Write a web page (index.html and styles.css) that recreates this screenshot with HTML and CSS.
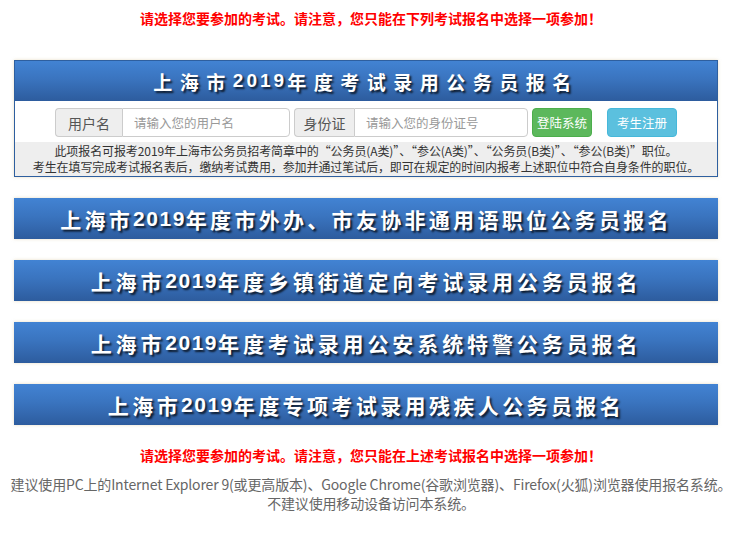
FILE: index.html
```html
<!DOCTYPE html>
<html lang="zh-CN">
<head>
<meta charset="utf-8">
<title>上海市2019年度考试录用公务员报名</title>
<link rel="stylesheet" href="styles.css">
</head>
<body>
<p class="notice notice-top">请选择您要参加的考试。请注意，您只能在下列考试报名中选择一项参加！</p>

<div class="wrap">
  <div class="panel">
    <div class="banner t1">上海市<span class="num">2019</span>年度考试录用公务员报名</div>
    <div class="login-row">
      <div class="group">
        <span class="addon addon-user">用户名</span>
        <input class="field field-user" type="text" placeholder="请输入您的用户名">
      </div>
      <div class="group">
        <span class="addon addon-id">身份证</span>
        <input class="field field-id" type="text" placeholder="请输入您的身份证号">
      </div>
      <button class="btn btn-login" type="button">登陆系统</button>
      <button class="btn btn-reg" type="button">考生注册</button>
    </div>
    <div class="info">
      <p>此项报名可报考2019年上海市公务员招考简章中的“公务员(A类)”、“参公(A类)”、“公务员(B类)”、“参公(B类)”职位。</p>
      <p>考生在填写完成考试报名表后，缴纳考试费用，参加并通过笔试后，即可在规定的时间内报考上述职位中符合自身条件的职位。</p>
    </div>
  </div>

  <a class="banner solo t2" href="#">上海市<span class="num">2019</span>年度市外办、市友协非通用语职位公务员报名</a>
  <a class="banner solo t3" href="#">上海市<span class="num">2019</span>年度乡镇街道定向考试录用公务员报名</a>
  <a class="banner solo t4" href="#">上海市<span class="num">2019</span>年度考试录用公安系统特警公务员报名</a>
  <a class="banner solo t5" href="#">上海市<span class="num">2019</span>年度专项考试录用残疾人公务员报名</a>
</div>

<p class="notice notice-bottom">请选择您要参加的考试。请注意，您只能在上述考试报名中选择一项参加！</p>
<div class="tips">
  <p>建议使用PC上的Internet Explorer 9(或更高版本)、Google Chrome(谷歌浏览器)、Firefox(火狐)浏览器使用报名系统。</p>
  <p>不建议使用移动设备访问本系统。</p>
</div>
</body>
</html>
```

FILE: styles.css
```css
* { box-sizing: border-box; }

body {
  margin: 0;
  background: #fff;
  font-family: "Noto Sans CJK SC", "Liberation Sans", sans-serif;
  color: #333;
}

p { margin: 0; }

.notice {
  text-align: center;
  color: #ff0000;
  font-weight: bold;
  font-size: 14px;
  line-height: 20px;
}

.notice-top { padding-top: 8px; }

.wrap {
  width: 704px;
  margin: 32px 0 0 14px;
  display: flex;
  flex-direction: column;
  gap: 21px;
}

.panel {
  border: 1px solid #2e5f9f;
  box-shadow: 0 0 3px rgba(210, 190, 140, 0.5);
  background: #fff;
}

.banner {
  display: flex;
  align-items: center;
  justify-content: center;
  height: 41px;
  background: linear-gradient(to bottom, #4283d3 0%, #3a74bf 45%, #2d5c9e 100%);
  color: #fff;
  font-family: "Liberation Sans", "Noto Sans CJK SC", sans-serif;
  font-weight: bold;
  text-decoration: none;
  text-shadow: 2px 2px 2px rgba(0, 0, 0, 0.75);
  white-space: nowrap;
}

.panel .banner { height: 40px; }

.solo {
  box-shadow: 0 0 3px rgba(210, 190, 140, 0.5);
}

.num { letter-spacing: 1.5px; }

.t1 { font-size: 19px; letter-spacing: 7.5px; }
.t1 .num { letter-spacing: 3px; }
.t2 { font-size: 21px; letter-spacing: 3.3px; }
.t3 { font-size: 21px; letter-spacing: 3.9px; }
.t4 { font-size: 21px; letter-spacing: 3.9px; }
.t5 { font-size: 21px; letter-spacing: 3.4px; }

.login-row {
  display: flex;
  justify-content: center;
  align-items: center;
  padding: 7px 0 5px;
}

.group {
  display: flex;
  height: 29px;
  margin-right: 4px;
}

.addon {
  display: flex;
  align-items: center;
  justify-content: center;
  background: #eeeeee;
  border: 1px solid #cccccc;
  border-right: 0;
  border-radius: 4px 0 0 4px;
  color: #555;
  font-size: 14px;
}

.addon-user { width: 67px; }
.addon-id { width: 60px; }

.field {
  height: 29px;
  border: 1px solid #cccccc;
  border-radius: 0 4px 4px 0;
  padding: 0 11px;
  font-family: "Noto Sans CJK SC", sans-serif;
  font-size: 12.5px;
  color: #555;
  outline: none;
}

.field::placeholder { color: #999; }

.field-user { width: 168px; }
.field-id { width: 174px; }

.btn {
  height: 29px;
  border-radius: 4px;
  border: 1px solid transparent;
  color: #fff;
  font-family: "Noto Sans CJK SC", sans-serif;
  font-size: 12.5px;
  padding: 0;
  cursor: pointer;
}

.btn-login {
  width: 60px;
  background: #5cb85c;
  border-color: #4cae4c;
  margin-right: 15px;
}

.btn-reg {
  width: 70px;
  background: #5bc0de;
  border-color: #46b8da;
}

.info {
  background: #eeeeee;
  text-align: center;
  font-size: 12px;
  line-height: 16px;
  padding: 1px 0 1px;
  color: #333;
  letter-spacing: -0.1px;
}

.notice-bottom { margin-top: 20px; }

.tips {
  margin-top: 10px;
  text-align: center;
  color: #666;
  font-size: 14px;
  line-height: 19px;
  letter-spacing: -0.15px;
}
```
